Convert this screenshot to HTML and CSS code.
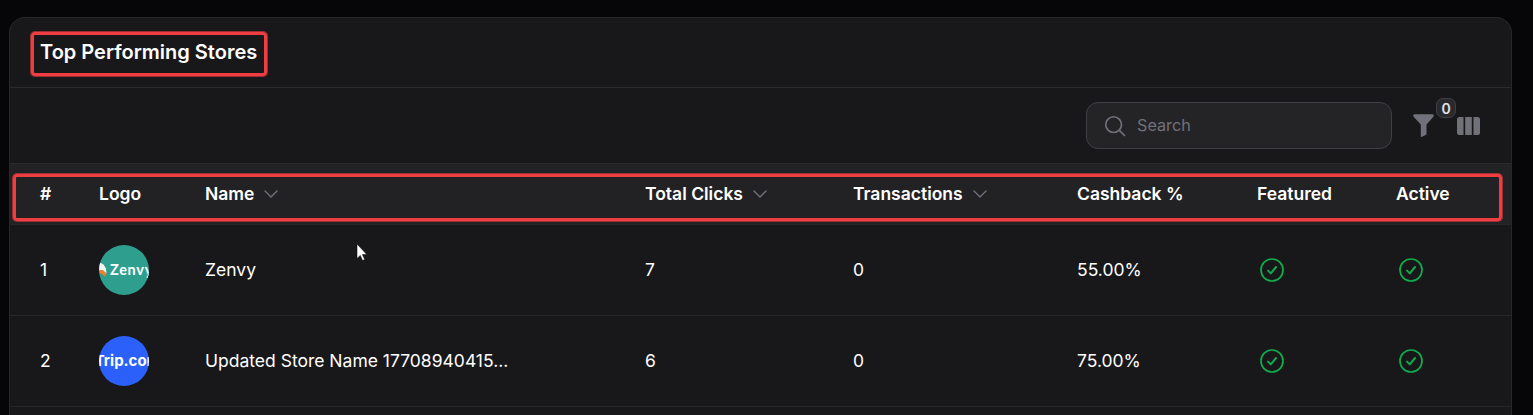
FILE: index.html
```html
<!DOCTYPE html>
<html lang="en">
<head>
    <meta charset="UTF-8">
    <meta name="viewport" content="width=device-width, initial-scale=1.0">
    <title>Top Performing Stores</title>
    <link rel="stylesheet" href="styles.css">
</head>
<body>
    <div class="card">
        <div class="card-header">
            <h2 class="card-title">Top Performing Stores</h2>
        </div>
        <div class="toolbar">
            <div class="search">
                <svg class="search-icon" viewBox="0 0 24 24" fill="none" stroke="currentColor" stroke-width="1.8" stroke-linecap="round"><circle cx="10.5" cy="10.5" r="8.6"/><path d="M17 17 22.4 22.4"/></svg>
                <span>Search</span>
            </div>
            <div class="tool-icons">
                <svg class="filter-icon" viewBox="0 0 21 23"><path d="M0.3 1.5Q0.3 0.3 1.5 0.3H19.5Q20.7 0.3 20.7 1.5Q20.7 2.5 20 3.2L13.5 10.5V20.5L8.6 23Q7.8 23 7.8 22V10.5L1 3.2Q0.3 2.5 0.3 1.5Z" fill="currentColor"/></svg>
                <span class="filter-badge">0</span>
                <svg class="columns-icon" viewBox="0 0 23 18" fill="currentColor"><path d="M2.5 0H6.5V18H2.5Q0 18 0 15.5V2.5Q0 0 2.5 0Z"/><rect x="8.2" width="6.6" height="18"/><path d="M16.5 0H20.5Q23 0 23 2.5V15.5Q23 18 20.5 18H16.5Z"/></svg>
            </div>
        </div>
        <table class="stores">
            <colgroup>
                <col class="col-num">
                <col class="col-logo">
                <col class="col-name">
                <col class="col-clicks">
                <col class="col-trans">
                <col class="col-cashback">
                <col class="col-featured">
                <col class="col-active">
            </colgroup>
            <thead>
                <tr>
                    <th>#</th>
                    <th>Logo</th>
                    <th>Name <svg class="sort" viewBox="0 0 14 8" fill="none" stroke="currentColor" stroke-width="1.4" stroke-linecap="round" stroke-linejoin="round"><path d="M1 1l6 6 6-6"/></svg></th>
                    <th>Total Clicks <svg class="sort" viewBox="0 0 14 8" fill="none" stroke="currentColor" stroke-width="1.4" stroke-linecap="round" stroke-linejoin="round"><path d="M1 1l6 6 6-6"/></svg></th>
                    <th>Transactions <svg class="sort" viewBox="0 0 14 8" fill="none" stroke="currentColor" stroke-width="1.4" stroke-linecap="round" stroke-linejoin="round"><path d="M1 1l6 6 6-6"/></svg></th>
                    <th>Cashback %</th>
                    <th>Featured</th>
                    <th>Active</th>
                </tr>
            </thead>
            <tbody>
                <tr>
                    <td>1</td>
                    <td>
                        <div class="logo logo-zenvy">
                            <svg class="zenvy-mark" viewBox="0 0 8 15"><path d="M0 0 4.5 2.5 7 6.5 7.5 11.5 3.5 8 0 8.5Z" fill="#f4f4f0"/><path d="M0.5 8.2 3.5 8 7.5 11.5 5.8 14.5 2.8 12 0.5 11Z" fill="#ee7f2d"/></svg>
                            <span>Zenvy</span>
                        </div>
                    </td>
                    <td>Zenvy</td>
                    <td>7</td>
                    <td>0</td>
                    <td>55.00%</td>
                    <td><svg class="check" viewBox="0 0 24 24" fill="none" stroke="currentColor" stroke-width="1.7" stroke-linecap="round" stroke-linejoin="round"><circle cx="12" cy="12" r="11"/><path d="M8 12.6l2.8 2.8 5.2-6.4" stroke-width="2"/></svg></td>
                    <td><svg class="check" viewBox="0 0 24 24" fill="none" stroke="currentColor" stroke-width="1.7" stroke-linecap="round" stroke-linejoin="round"><circle cx="12" cy="12" r="11"/><path d="M8 12.6l2.8 2.8 5.2-6.4" stroke-width="2"/></svg></td>
                </tr>
                <tr>
                    <td>2</td>
                    <td>
                        <div class="logo logo-trip"><span>Trip.com</span></div>
                    </td>
                    <td>Updated Store Name 17708940415...</td>
                    <td>6</td>
                    <td>0</td>
                    <td>75.00%</td>
                    <td><svg class="check" viewBox="0 0 24 24" fill="none" stroke="currentColor" stroke-width="1.7" stroke-linecap="round" stroke-linejoin="round"><circle cx="12" cy="12" r="11"/><path d="M8 12.6l2.8 2.8 5.2-6.4" stroke-width="2"/></svg></td>
                    <td><svg class="check" viewBox="0 0 24 24" fill="none" stroke="currentColor" stroke-width="1.7" stroke-linecap="round" stroke-linejoin="round"><circle cx="12" cy="12" r="11"/><path d="M8 12.6l2.8 2.8 5.2-6.4" stroke-width="2"/></svg></td>
                </tr>
            </tbody>
        </table>
    </div>

    <!-- annotation boxes and pointer, lying over the page -->
    <div class="mark mark-title"></div>
    <div class="mark mark-head"></div>
    <svg class="pointer" viewBox="0 0 12 18"><path d="M1 0V14.5L4.3 11.4 6.6 16.6 8.7 15.6 6.4 10.6H10.8Z" fill="#fff" stroke="#000" stroke-width="0.5"/></svg>
</body>
</html>
```
FILE: styles.css
```css
* {
    box-sizing: border-box;
}
html, body {
    height: 100%;
}
body {
    margin: 0;
    height: 415px;
    overflow: hidden;
    position: relative;
    padding: 17px 21px 0 9px;
    background: #060608;
    color: #fff;
    font-family: Inter, "Liberation Sans", sans-serif;
    font-size: 17.5px;
}

.card {
    height: 398px;
    overflow: hidden;
    background: #18181b;
    border: 1px solid #27272a;
    border-bottom: 0;
    border-radius: 16px 16px 0 0;
}
.card-header {
    height: 70px;
    padding: 0 30px 2px;
    display: flex;
    align-items: center;
    border-bottom: 1px solid #2b2b2e;
}
.card-title {
    margin: 0;
    font-size: 20px;
    font-weight: 600;
}

.toolbar {
    height: 76px;
    padding-right: 31px;
    display: flex;
    justify-content: flex-end;
    align-items: center;
    border-bottom: 1px solid #2b2b2e;
}
.search {
    width: 306px;
    height: 47px;
    margin-right: 21px;
    padding: 0 17px;
    display: flex;
    align-items: center;
    gap: 11px;
    font-size: 16.2px;
    color: #71717a;
    background: #242427;
    border: 1px solid #3f3f46;
    border-radius: 12px;
}
.search span {
    margin-bottom: 2px;
}
.search-icon {
    width: 22px;
    height: 22px;
}
.tool-icons {
    display: flex;
    align-items: center;
    position: relative;
    color: #71717a;
}
.filter-icon {
    width: 21px;
    height: 23px;
    margin-right: 23px;
}
.columns-icon {
    width: 23px;
    height: 18px;
}
.filter-badge {
    position: absolute;
    left: 23px;
    top: -16px;
    width: 20px;
    height: 20px;
    display: flex;
    justify-content: center;
    align-items: center;
    font-size: 14px;
    font-weight: 600;
    color: #e4e4e7;
    background: #2a2a2d;
    border: 1px solid #3f3f46;
    border-radius: 7px;
}

.stores {
    width: 100%;
    table-layout: fixed;
    border-collapse: collapse;
}
.col-num { width: 74px; }
.col-logo { width: 106px; }
.col-name { width: 440px; }
.col-clicks { width: 208px; }
.col-trans { width: 224px; }
.col-cashback { width: 180px; }
.col-featured { width: 139px; }

.stores th, .stores td {
    padding: 0 0 0 15px;
    text-align: left;
    vertical-align: middle;
    white-space: nowrap;
}
.stores th:first-child, .stores td:first-child {
    padding-left: 30px;
}
.stores th {
    height: 60px;
    font-weight: 600;
    background: #222225;
}
.stores td {
    height: 91px;
    border-top: 1px solid #27272a;
}
.stores tr:last-child td {
    border-bottom: 1px solid #27272a;
}
.sort {
    width: 14px;
    height: 8px;
    margin-left: 5.5px;
    vertical-align: 2px;
    color: #71717a;
}

.logo {
    width: 50px;
    height: 50px;
    border-radius: 50%;
    overflow: hidden;
    display: flex;
    align-items: center;
    color: #fff;
    white-space: nowrap;
}
.logo-zenvy {
    background: #2e9f8f;
    font-family: Lato, sans-serif;
    font-size: 14.5px;
    font-weight: 700;
    letter-spacing: 0.7px;
}
.zenvy-mark {
    width: 8px;
    height: 15px;
    flex: none;
    margin-right: 3px;
}
.logo-trip {
    background: #2b60fb;
    font-size: 15px;
    font-weight: 700;
    justify-content: center;
}
.logo-trip span {
    margin-left: 7px;
}
.check {
    display: block;
    width: 24px;
    height: 24px;
    margin-left: 3px;
    color: #10ac4c;
}

.mark {
    position: absolute;
    border: 3px solid #ef3e42;
    border-radius: 4px;
    box-shadow: 0 0 0 1px rgba(239, 62, 66, 0.6);
}
.mark-title {
    left: 31px;
    top: 32px;
    width: 236px;
    height: 44px;
}
.mark-head {
    left: 13px;
    top: 174px;
    width: 1489px;
    height: 47px;
}
.pointer {
    position: absolute;
    left: 356px;
    top: 244px;
    width: 12px;
    height: 18px;
}
```
